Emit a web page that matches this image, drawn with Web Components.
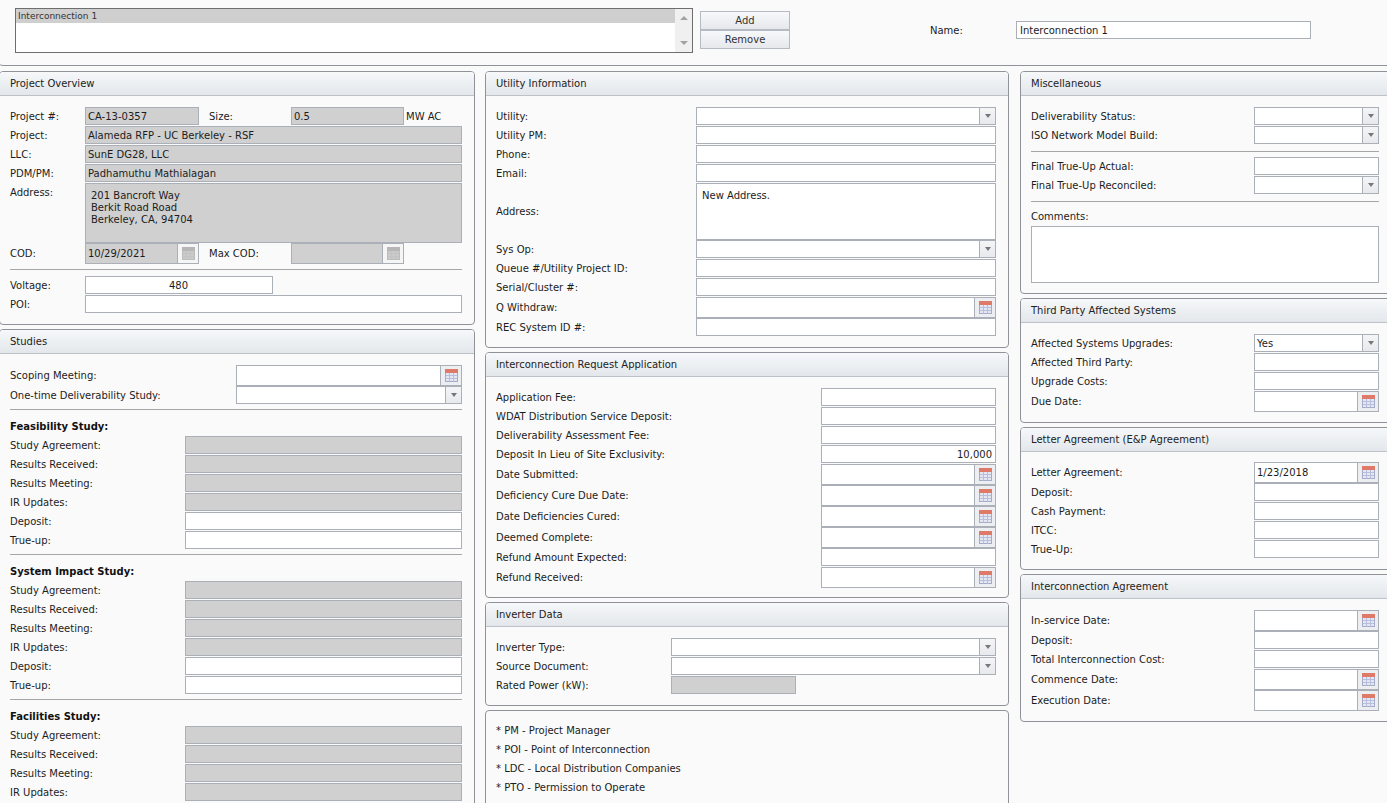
<!DOCTYPE html>
<html lang="en">
<head>
<meta charset="UTF-8">
<title>Interconnection</title>
<style>
  html, body { margin: 0; height: 803px; overflow: hidden; background: #fafafa; }
  body { font: 10px "DejaVu Sans", Verdana, sans-serif; color: #1c1c1c; }
  .cols { display: flex; align-items: flex-start; margin-left: -1px; width: 1400px; }
  .col { display: flex; flex-direction: column; gap: 4px; flex: none; }
  .c1 { width: 476px; margin-right: 10px; } .c2 { width: 524px; margin-right: 11px; } .c3 { width: 372px; }
</style>
</head>
<body>

<ic-topbar name="Interconnection 1"></ic-topbar>

<div class="cols">
  <div class="col c1">
    <ic-panel heading="Project Overview" style="--lw:75px">
      <ic-row label="Project #:">
        <ic-field w="114" value="CA-13-0357" disabled></ic-field>
        <ic-label w="82" ml="10">Size:</ic-label>
        <ic-field w="113" value="0.5" disabled></ic-field>
        <ic-label ml="2">MW AC</ic-label>
      </ic-row>
      <ic-row label="Project:"><ic-field value="Alameda RFP - UC Berkeley - RSF" disabled></ic-field></ic-row>
      <ic-row label="LLC:"><ic-field value="SunE DG28, LLC" disabled></ic-field></ic-row>
      <ic-row label="PDM/PM:"><ic-field value="Padhamuthu Mathialagan" disabled></ic-field></ic-row>
      <ic-row label="Address:" top><ic-field kind="area" h="60" disabled value="201 Bancroft Way&#10;Berkit Road Road&#10;Berkeley, CA, 94704"></ic-field></ic-row>
      <ic-row label="COD:">
        <ic-field kind="date" w="114" value="10/29/2021" disabled></ic-field>
        <ic-label w="82" ml="10">Max COD:</ic-label>
        <ic-field kind="date" w="113" disabled></ic-field>
      </ic-row>
      <ic-rule mt="5" mb="6"></ic-rule>
      <ic-row label="Voltage:"><ic-field w="188" value="480" align="center"></ic-field></ic-row>
      <ic-row label="POI:"><ic-field></ic-field></ic-row>
    </ic-panel>

    <ic-panel heading="Studies" style="--lw:175px">
      <ic-row label="Scoping Meeting:" style="--lw:226px"><ic-field kind="date"></ic-field></ic-row>
      <ic-row label="One-time Deliverability Study:" style="--lw:226px"><ic-field kind="select"></ic-field></ic-row>
      <ic-rule mt="4"></ic-rule>
      <ic-study heading="Feasibility Study:"></ic-study>
      <ic-rule mt="4"></ic-rule>
      <ic-study heading="System Impact Study:"></ic-study>
      <ic-rule mt="4"></ic-rule>
      <!-- 나머지 행은 화면 아래로 잘림 -->
      <ic-study heading="Facilities Study:" rows="4"></ic-study>
    </ic-panel>
  </div>

  <div class="col c2">
    <ic-panel heading="Utility Information" style="--lw:200px">
      <ic-row label="Utility:"><ic-field kind="select"></ic-field></ic-row>
      <ic-row label="Utility PM:"><ic-field></ic-field></ic-row>
      <ic-row label="Phone:"><ic-field></ic-field></ic-row>
      <ic-row label="Email:"><ic-field></ic-field></ic-row>
      <ic-row label="Address:"><ic-field kind="area" h="57" value="New Address."></ic-field></ic-row>
      <ic-row label="Sys Op:"><ic-field kind="select"></ic-field></ic-row>
      <ic-row label="Queue #/Utility Project ID:"><ic-field></ic-field></ic-row>
      <ic-row label="Serial/Cluster #:"><ic-field></ic-field></ic-row>
      <ic-row label="Q Withdraw:"><ic-field kind="date"></ic-field></ic-row>
      <ic-row label="REC System ID #:"><ic-field></ic-field></ic-row>
    </ic-panel>

    <ic-panel heading="Interconnection Request Application" style="--lw:325px; --pb:9px">
      <ic-row label="Application Fee:"><ic-field></ic-field></ic-row>
      <ic-row label="WDAT Distribution Service Deposit:"><ic-field></ic-field></ic-row>
      <ic-row label="Deliverability Assessment Fee:"><ic-field></ic-field></ic-row>
      <ic-row label="Deposit In Lieu of Site Exclusivity:"><ic-field value="10,000" align="right"></ic-field></ic-row>
      <ic-row label="Date Submitted:"><ic-field kind="date"></ic-field></ic-row>
      <ic-row label="Deficiency Cure Due Date:"><ic-field kind="date"></ic-field></ic-row>
      <ic-row label="Date Deficiencies Cured:"><ic-field kind="date"></ic-field></ic-row>
      <ic-row label="Deemed Complete:"><ic-field kind="date"></ic-field></ic-row>
      <ic-row label="Refund Amount Expected:"><ic-field></ic-field></ic-row>
      <ic-row label="Refund Received:"><ic-field kind="date"></ic-field></ic-row>
    </ic-panel>

    <ic-panel heading="Inverter Data" style="--lw:175px">
      <ic-row label="Inverter Type:"><ic-field kind="select"></ic-field></ic-row>
      <ic-row label="Source Document:"><ic-field kind="select"></ic-field></ic-row>
      <ic-row label="Rated Power (kW):"><ic-field w="125" disabled></ic-field></ic-row>
    </ic-panel>

    <ic-panel style="--lw:0px; --pt:10px">
      <ic-note>* PM - Project Manager</ic-note>
      <ic-note>* POI - Point of Interconnection</ic-note>
      <ic-note>* LDC - Local Distribution Companies</ic-note>
      <ic-note>* PTO - Permission to Operate</ic-note>
      <ic-note></ic-note>
    </ic-panel>
  </div>

  <div class="col c3">
    <ic-panel heading="Miscellaneous" style="--lw:223px">
      <ic-row label="Deliverability Status:"><ic-field kind="select"></ic-field></ic-row>
      <ic-row label="ISO Network Model Build:"><ic-field kind="select"></ic-field></ic-row>
      <ic-rule mt="6" mb="5"></ic-rule>
      <ic-row label="Final True-Up Actual:"><ic-field></ic-field></ic-row>
      <ic-row label="Final True-Up Reconciled:"><ic-field kind="select"></ic-field></ic-row>
      <ic-rule mt="6"></ic-rule>
      <ic-label h="24" lh="30">Comments:</ic-label>
      <ic-field kind="area" h="57"></ic-field>
    </ic-panel>

    <ic-panel heading="Third Party Affected Systems" style="--lw:223px">
      <ic-row label="Affected Systems Upgrades:"><ic-field kind="select" value="Yes"></ic-field></ic-row>
      <ic-row label="Affected Third Party:"><ic-field></ic-field></ic-row>
      <ic-row label="Upgrade Costs:"><ic-field></ic-field></ic-row>
      <ic-row label="Due Date:"><ic-field kind="date"></ic-field></ic-row>
    </ic-panel>

    <ic-panel heading="Letter Agreement (E&amp;P Agreement)" style="--lw:223px; --pt:10px">
      <ic-row label="Letter Agreement:"><ic-field kind="date" value="1/23/2018"></ic-field></ic-row>
      <ic-row label="Deposit:"><ic-field></ic-field></ic-row>
      <ic-row label="Cash Payment:"><ic-field></ic-field></ic-row>
      <ic-row label="ITCC:"><ic-field></ic-field></ic-row>
      <ic-row label="True-Up:"><ic-field></ic-field></ic-row>
    </ic-panel>

    <ic-panel heading="Interconnection Agreement" style="--lw:223px">
      <ic-row label="In-service Date:"><ic-field kind="date"></ic-field></ic-row>
      <ic-row label="Deposit:"><ic-field></ic-field></ic-row>
      <ic-row label="Total Interconnection Cost:"><ic-field></ic-field></ic-row>
      <ic-row label="Commence Date:"><ic-field kind="date"></ic-field></ic-row>
      <ic-row label="Execution Date:"><ic-field kind="date"></ic-field></ic-row>
    </ic-panel>
  </div>
</div>

<script>
  // 달력 아이콘 (활성 / 비활성)
  function calendarIcon(disabled) {
    const head = disabled ? '#b6b6b6' : '#e07a68';
    const body = disabled ? '#cacaca' : '#e4e6f2';
    const line = disabled ? '#c3c3c3' : '#b7bfdc';
    const edge = disabled ? '#bcbcbc' : '#a4acca';
    return `<svg width="13" height="13" viewBox="0 0 13 13">
      <rect x="0.5" y="0.5" width="12" height="12" fill="${body}" stroke="${edge}"/>
      <rect x="0" y="0" width="13" height="4" fill="${head}"/>
      <path d="M4.5 4v8.5M8.5 4v8.5M1 6.5h11M1 9.5h11" stroke="${line}" fill="none"/>
    </svg>`;
  }

  class IcTopbar extends HTMLElement {
    constructor() {
      super();
      const shadow = this.attachShadow({ mode: 'open' });
      shadow.innerHTML = `
        <style>
          :host { display: flex; height: 65px; margin: 0 0 5px -1px; padding-left: 16px; box-sizing: content-box;
                  border-bottom: 1px solid #8f9399; border-bottom-left-radius: 4px; }
          .list { display: flex; justify-content: space-between; width: 678px; height: 45px; margin-top: 8px; box-sizing: border-box;
                  border: 1px solid #6e6e6e; background: #fff; }
          .sel { flex: 1; height: 14px; padding: 0 0 0 2px; background: #cfcfcf; font-size: 9px; line-height: 14px; color: #333; }
          .bar { width: 17px; background: #f0f0f0; display: flex; flex-direction: column; justify-content: space-between; align-items: center; padding: 7px 0; box-sizing: border-box; }
          .up, .down { width: 0; height: 0; border-left: 4px solid transparent; border-right: 4px solid transparent; }
          .up { border-bottom: 4px solid #a3a3a3; } .down { border-top: 4px solid #a3a3a3; }
          .btns { width: 90px; margin: 11px 0 0 7px; }
          .btn { height: 19px; box-sizing: border-box; border: 1px solid #b6bac2; background: linear-gradient(#f7f8fa, #e6e8ec); text-align: center; line-height: 17px; color: #333; }
          .name { width: 86px; margin: 22px 0 0 140px; line-height: 18px; }
          .input { width: 295px; height: 18px; margin-top: 21px; box-sizing: border-box; border: 1px solid #abb0b8; background: #fff; padding: 1px 0 0 3px; line-height: 16px; }
        </style>
        <div class="list"><div class="sel">${this.getAttribute('name')}</div><div class="bar"><div class="up"></div><div class="down"></div></div></div>
        <div class="btns"><div class="btn">Add</div><div class="btn">Remove</div></div>
        <div class="name">Name:</div>
        <div class="input">${this.getAttribute('name')}</div>`;
    }
  }
  customElements.define('ic-topbar', IcTopbar);

  class IcPanel extends HTMLElement {
    constructor() {
      super();
      const shadow = this.attachShadow({ mode: 'open' });
      const heading = this.getAttribute('heading');
      shadow.innerHTML = `
        <style>
          :host { display: block; border: 1px solid #8f9399; border-radius: 4px; background: #fafafa; overflow: hidden; }
          .head { height: 23px; padding-left: 10px; line-height: 23px; color: #222; border-bottom: 1px solid #bcc2c8;
                  background: linear-gradient(#f6f8fa, #e3e7eb); }
          .body { padding: var(--pt, 11px) 12px var(--pb, 10px) 10px; }
        </style>
        ${heading ? `<div class="head">${heading}</div>` : ''}
        <div class="body"><slot></slot></div>`;
    }
  }
  customElements.define('ic-panel', IcPanel);

  class IcRow extends HTMLElement {
    constructor() {
      super();
      const shadow = this.attachShadow({ mode: 'open' });
      const top = this.hasAttribute('top');
      shadow.innerHTML = `
        <style>
          :host { display: flex; align-items: ${top ? 'flex-start' : 'center'}; }
          .lab { flex: none; width: var(--lw); line-height: 18px; ${top ? 'padding-top: 1px;' : ''} }
          .val { flex: 1; display: flex; align-items: center; min-width: 0; }
          ::slotted(ic-field) { flex: 1; }
        </style>
        <div class="lab">${this.getAttribute('label') || ''}</div>
        <div class="val"><slot></slot></div>`;
    }
  }
  customElements.define('ic-row', IcRow);

  class IcLabel extends HTMLElement {
    constructor() {
      super();
      const shadow = this.attachShadow({ mode: 'open' });
      const w = this.getAttribute('w');
      const ml = this.getAttribute('ml') || 0;
      const h = this.getAttribute('h') || 18;
      const lh = this.getAttribute('lh') || h;
      shadow.innerHTML = `
        <style>
          :host { display: block; flex: none; ${w ? `width:${w}px;` : ''} margin-left: ${ml}px; line-height: ${lh}px; height: ${h}px; }
        </style><slot></slot>`;
    }
  }
  customElements.define('ic-label', IcLabel);

  class IcField extends HTMLElement {
    constructor() {
      super();
      const shadow = this.attachShadow({ mode: 'open' });
      const kind = this.getAttribute('kind') || 'text';
      const disabled = this.hasAttribute('disabled');
      const value = this.getAttribute('value') || '';
      const align = this.getAttribute('align') || 'left';
      const w = this.getAttribute('w');
      const h = this.getAttribute('h') || (kind === 'date' ? 21 : 18);
      const gap = kind === 'date' || kind === 'area' ? 0 : 1;
      let btn = '';
      if (kind === 'date') btn = `<div class="btn cal">${calendarIcon(disabled)}</div>`;
      if (kind === 'select') btn = '<div class="btn drop"><i></i></div>';
      shadow.innerHTML = `
        <style>
          :host { display: flex; box-sizing: border-box; height: ${h}px; margin-bottom: ${gap}px;
                  ${w ? `flex: none !important; width: ${w}px;` : 'width: 100%;'}
                  border: 1px solid #abb0b8; background: ${disabled ? '#d0d0d0' : '#fff'}; }
          .txt { flex: 1; min-width: 0; padding: ${kind === 'date' ? 0 : 1}px 3px 0 2px; text-align: ${align}; line-height: ${h - 2}px; white-space: pre; }
          .area { padding: 6px 5px; line-height: 12px; }
          .btn { flex: none; display: flex; align-items: center; justify-content: center; border-left: 1px solid #abb0b8; }
          .cal { width: 20px; background: ${disabled ? '#f5f5f5' : '#eceef2'}; }
          .drop { width: 15px; background: linear-gradient(#f4f5f7, #e7e9ed); }
          .drop i { width: 0; height: 0; border-left: 3.5px solid transparent; border-right: 3.5px solid transparent; border-top: 4px solid #777; }
        </style>
        <div class="txt ${kind === 'area' ? 'area' : ''}">${value}</div>${btn}`;
    }
  }
  customElements.define('ic-field', IcField);

  class IcRule extends HTMLElement {
    constructor() {
      super();
      const shadow = this.attachShadow({ mode: 'open' });
      shadow.innerHTML = `
        <style>
          :host { display: block; height: 1px; background: #a4a6aa;
                  margin: ${this.getAttribute('mt') || 0}px 0 ${this.getAttribute('mb') || 0}px; }
        </style>`;
    }
  }
  customElements.define('ic-rule', IcRule);

  class IcStudy extends HTMLElement {
    constructor() {
      super();
      const shadow = this.attachShadow({ mode: 'open' });
      const rows = [['Study Agreement:', 1], ['Results Received:', 1], ['Results Meeting:', 1], ['IR Updates:', 1], ['Deposit:', 0], ['True-up:', 0]]
        .slice(0, +this.getAttribute('rows') || 6);
      shadow.innerHTML = `
        <style>
          :host { display: block; }
          .h { height: 26px; line-height: 34px; font-weight: bold; color: #111; }
        </style>
        <div class="h">${this.getAttribute('heading')}</div>
        ${rows.map(r => `<ic-row label="${r[0]}"><ic-field ${r[1] ? 'disabled' : ''}></ic-field></ic-row>`).join('')}`;
    }
  }
  customElements.define('ic-study', IcStudy);

  class IcNote extends HTMLElement {
    constructor() {
      super();
      const shadow = this.attachShadow({ mode: 'open' });
      shadow.innerHTML = `
        <style>:host { display: block; height: 19px; line-height: 19px; }</style><slot></slot>`;
    }
  }
  customElements.define('ic-note', IcNote);
</script>
</body>
</html>
